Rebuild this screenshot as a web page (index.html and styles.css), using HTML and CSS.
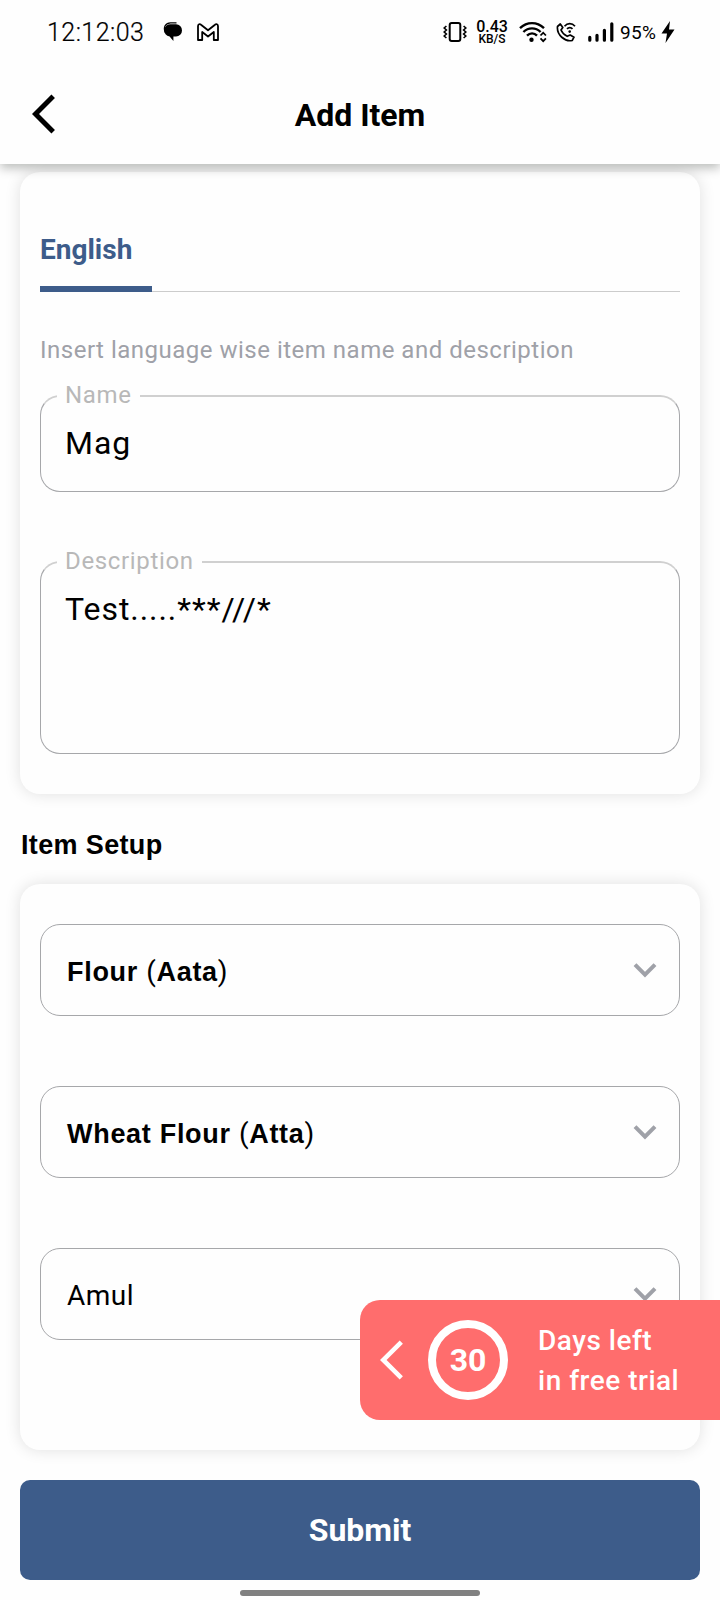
FILE: index.html
```html
<!DOCTYPE html>
<html lang="en">
<head>
<meta charset="utf-8">
<title>Add Item</title>
<link rel="stylesheet" href="styles.css">
</head>
<body>
<div class="screen">
  <header class="header">
    <div class="status">
      <span class="clock">12:12:03</span>
      <svg class="ico-chat" width="20" height="20" viewBox="0 0 20 20"><path d="M2.500 11C-.5 5 3 .8 7.500 .8h6" fill="none" stroke="#000" stroke-width="1.200"/><path d="M8 2.200h5a6 6.200 0 0 1 0 12.400h-2.600V19L6.600 14.600A6 6.200 0 0 1 8 2.200z"/></svg>
      <svg class="ico-mail" width="22" height="18" viewBox="0 0 22 18"><path d="M1 17V3.200C1 1 2.800 .6 4 1.700l7 5.600 7-5.600C19.200 .6 21 1 21 3.200V17h-4.200V9L11 13.500 5.200 9v8z" fill="none" stroke="#000" stroke-width="1.800" stroke-linejoin="round"/></svg>
      <span class="grow"></span>
      <svg class="ico-vib" width="24" height="20" viewBox="0 0 24 20"><rect x="6.700" y="1" width="10.600" height="18" rx="2" fill="none" stroke="#000" stroke-width="2"/><path d="M3.400 4L1.200 6l2.200 2-2.200 2 2.200 2-2.200 2 2.200 2M20.600 4l2.200 2-2.200 2 2.200 2-2.200 2 2.200 2-2.200 2" fill="none" stroke="#000" stroke-width="1.600"/></svg>
      <span class="speed"><b>0.43</b><i>KB/S</i></span>
      <svg class="ico-wifi" width="28" height="22" viewBox="0 0 28 22"><g fill="none" stroke="#000" stroke-width="2.400"><path d="M1 7.200c7-6.800 17-6.800 24 0M4.400 11c5-4.800 12.200-4.800 17.200 0M8 14.600c3-3 7.200-3 10 0"/></g><circle cx="12.500" cy="18.800" r="2.200"/><path d="M21.500 14.500l2.700-2.800 2.700 2.800M21.500 17.300l2.700 2.800 2.700-2.800" fill="none" stroke="#000" stroke-width="1.800"/></svg>
      <svg class="ico-call" width="20" height="20" viewBox="0 0 20 20"><g fill="none" stroke="#000" stroke-width="1.700" stroke-linejoin="round"><path d="M1.500 4.500L4.300 2 6.800 5.500 5 8c1.200 2.800 3.200 5 6.200 6.300l3-1.300 3.800 2.200-1.800 3.300C9 20 .5 13 1.500 4.500z"/><path d="M8.500 4.200c3-3.400 7.500-3.400 10.500 0M11 6.900c1.600-1.800 4-1.800 5.500 0"/></g><circle cx="13.700" cy="9.600" r="1.300"/></svg>
      <svg class="ico-sig" width="26" height="20" viewBox="0 0 26 20"><g stroke="#000" stroke-width="3.200" stroke-linecap="round"><path d="M1.800 18.200v-2.800M9 18.200v-4.900M16.400 18.200V8.300M23.800 18.200V1.800"/></g></svg>
      <span class="batt">95%</span>
      <svg class="ico-bolt" width="14" height="22" viewBox="0 0 14 22"><path d="M9 0L.5 12.500H6L4.500 22 13.500 8.600H8z"/></svg>
    </div>
    <div class="bar">
      <svg class="back" width="24" height="40" viewBox="0 0 24 40"><path d="M21.200 2.300L3.500 20l17.700 17.700" fill="none" stroke="#000" stroke-width="5"/></svg>
      <h1 class="title">Add Item</h1>
    </div>
  </header>
  <main class="content">
    <section class="card names">
      <div class="tabs"><span class="tab">English</span></div>
      <p class="hint">Insert language wise item name and description</p>
      <fieldset class="field name"><legend>Name</legend><div class="value">Mag</div></fieldset>
      <fieldset class="field desc"><legend>Description</legend><div class="value">Test.....***///*</div></fieldset>
    </section>
    <h2 class="section-title">Item Setup</h2>
    <section class="card setup">
      <div class="select"><span class="strong">Flour <span class="paren">(</span>Aata<span class="paren">)</span></span><svg width="24" height="16" viewBox="0 0 24 16"><path d="M2 2.700L12 12.700l10-10" fill="none" stroke="#9fa1a8" stroke-width="4"/></svg></div>
      <div class="select"><span class="strong">Wheat Flour <span class="paren">(</span>Atta<span class="paren">)</span></span><svg width="24" height="16" viewBox="0 0 24 16"><path d="M2 2.700L12 12.700l10-10" fill="none" stroke="#9fa1a8" stroke-width="4"/></svg></div>
      <div class="select"><span class="plain">Amul</span><svg width="24" height="16" viewBox="0 0 24 16"><path d="M2 2.700L12 12.700l10-10" fill="none" stroke="#9fa1a8" stroke-width="4"/></svg></div>
    </section>
    <button class="submit">Submit</button>
  </main>
  <div class="home"></div>
  <aside class="trial">
    <svg width="24" height="40" viewBox="0 0 24 40"><path d="M21.300 2.200L3.200 20l18.100 17.800" fill="none" stroke="#fff" stroke-width="4.600"/></svg>
    <span class="days">30</span>
    <span class="trial-text">Days left<br>in free trial</span>
  </aside>
</div>
</body>
</html>
```
FILE: styles.css
```css
* { box-sizing: border-box; margin: 0; padding: 0; }
body { background: #fefefe; font-family: Roboto, "Liberation Sans", sans-serif; color: #000; }
.screen { position: relative; width: 720px; height: 1600px; overflow: hidden; }
svg { display: block; flex: none; }

.header { position: relative; z-index: 2; height: 164px; background: #fefefe; box-shadow: 0 4px 10px rgba(0, 10, 5, .27); }
.status { display: flex; align-items: center; height: 64px; padding: 0 45px 0 47px; }
.clock { width: 97px; font-size: 25px; font-weight: 300; -webkit-text-stroke: .2px #000; letter-spacing: .45px; white-space: nowrap; }
.ico-chat { margin-left: 19px; }
.ico-mail { margin-left: 14px; }
.grow { flex: 1; }
.speed { width: 34px; margin: 0 10px 0 8px; padding-top: 2px; display: flex; flex-direction: column; align-items: center; font-weight: 500; }
.speed b { font-size: 16px; line-height: 12px; font-weight: 500; }
.speed i { font-size: 12px; line-height: 12px; font-style: normal; }
.ico-call { margin-left: 9px; }
.ico-sig { margin-left: 12px; }
.batt { width: 38px; margin: 0 3px 0 6px; font-size: 19px; letter-spacing: .3px; white-space: nowrap; }
.bar { display: flex; align-items: center; height: 100px; padding: 0 32px; }
.title { width: 608px; padding-top: 1px; font-size: 32px; font-weight: 700; text-align: center; }
.back { width: 24px; }

.content { padding: 8px 20px 0; }
.card { border-radius: 20px; background: #fefefe; box-shadow: 0 0 16px rgba(0, 0, 0, .12); padding: 0 20px; }
.names { height: 622px; }
.tabs { height: 120px; padding-top: 58px; border-bottom: 1px solid #ccc; }
.tab { display: block; width: 112px; height: 62px; padding-top: 4px; line-height: 32px; border-bottom: 6px solid #3d5c8a; color: #3d5c8a; font-size: 28px; font-weight: 700; white-space: nowrap; }
.hint { padding-top: 42px; height: 94px; line-height: 32px; font-size: 24px; letter-spacing: .5px; color: #9fa1a8; white-space: nowrap; }
.field { border: 1px solid #a6a7aa; border-top: 2px solid #d0d0d0; border-radius: 20px; padding: 0 24px 0 16px; min-width: 0; }
.field legend { height: 20px; padding: 0 8px; line-height: 18px; font-size: 24px; letter-spacing: .65px; color: #b8b8b8; }
.value { padding: 17px 0 0 8px; font-size: 32px; line-height: 40px; letter-spacing: .95px; }
.name { height: 106px; }
.desc { height: 202px; margin-top: 60px; }
.section-title { height: 90px; padding: 31px 0 0 1px; font: 700 27px/40px "Liberation Sans", sans-serif; letter-spacing: .35px; }
.setup { height: 566px; padding-top: 40px; display: flex; flex-direction: column; gap: 70px; }
.select { height: 92px; border: 1px solid #a6a7aa; border-radius: 20px; padding: 0 22px 0 26px; display: flex; align-items: center; justify-content: space-between; font-size: 28px; }
.strong { padding-top: 2px; font: 700 27px "Liberation Sans", sans-serif; letter-spacing: .7px; }
.paren { font: 400 28px Roboto, sans-serif; }
.plain { padding-top: 2px; letter-spacing: .5px; }
.submit { display: block; width: 680px; height: 100px; margin-top: 30px; border: 0; border-radius: 10px; background: #3d5c8a; color: #fff; font: 700 32px Roboto, sans-serif; }
.home { width: 240px; height: 6px; margin: 10px auto 0; border-radius: 3px; background: #808080; }

.trial { position: absolute; z-index: 3; right: 0; top: 1300px; width: 360px; height: 120px; padding-left: 20px; display: flex; align-items: center; border-radius: 20px 0 0 20px; background: #ff6d6d; color: #fff; }
.days { width: 80px; height: 80px; margin-left: 24px; border: 8px solid #fff; border-radius: 50%; line-height: 64px; text-align: center; font-size: 32px; font-weight: 700; }
.trial-text { margin-left: 30px; padding-top: 2px; font-size: 28px; font-weight: 500; line-height: 40px; letter-spacing: .5px; white-space: nowrap; }
```
